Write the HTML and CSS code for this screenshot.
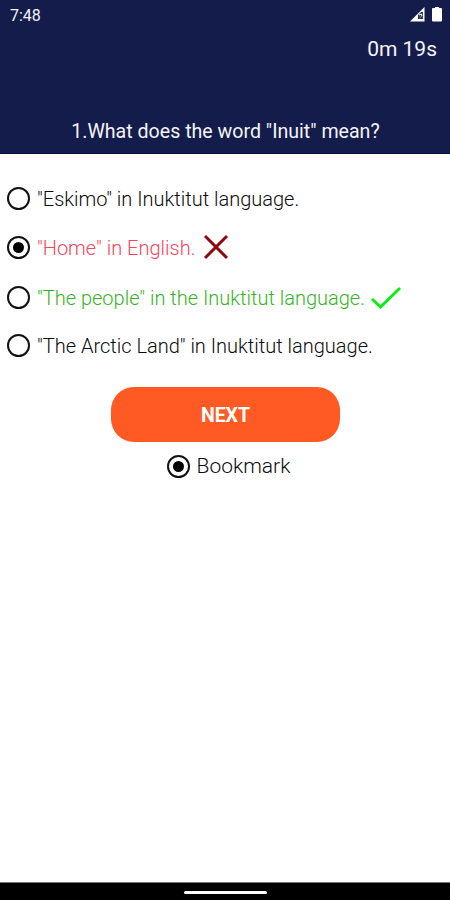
FILE: index.html
```html
<!DOCTYPE html>
<html lang="en">
<head>
<meta charset="utf-8">
<title>Quiz</title>
<link rel="stylesheet" href="styles.css">
</head>
<body>
<div class="screen">
  <header class="header">
    <div class="status">
      <span class="clock">7:48</span>
      <svg class="status-icons" width="34" height="18" viewBox="0 0 34 18">
        <path d="M0 15.5L14.5 1V15.5Z" fill="#fff"/>
        <path d="M8 13V9L11 6H13V13Z" fill="#30375f"/>
        <path d="M9 9Q12 7 12 9Q12 10 10.5 11M10.5 13V14" fill="none" stroke="#fff" stroke-width="1"/>
        <path d="M25 1H29V2H31Q32 2 32 3V14.5Q32 15.5 31 15.5H23Q22 15.5 22 14.5V3Q22 2 23 2H25Z" fill="#fff"/>
      </svg>
    </div>
    <div class="timer">0m 19s</div>
    <h1 class="question">1.What does the word "Inuit" mean?</h1>
  </header>
  <main class="main">
    <ul class="options">
      <li class="option"><span class="radio"></span><span class="label">"Eskimo" in Inuktitut language.</span></li>
      <li class="option wrong"><span class="radio checked"></span><span class="label">"Home" in English.</span>
        <svg class="cross" width="26" height="26" viewBox="0 0 26 26"><path d="M2 2L24 24M24 2L2 24" fill="none" stroke="#8f0a0c" stroke-width="3"/></svg></li>
      <li class="option right"><span class="radio"></span><span class="label">"The people" in the Inuktitut language.</span>
        <svg class="check" width="32" height="24" viewBox="0 0 32 24"><path d="M2 13L10.5 21L30 2" fill="none" stroke="#08ee12" stroke-width="3"/></svg></li>
      <li class="option"><span class="radio"></span><span class="label">"The Arctic Land" in Inuktitut language.</span></li>
    </ul>
    <button class="next">NEXT</button>
    <div class="bookmark"><span class="radio checked"></span><span class="bookmark-label">Bookmark</span></div>
  </main>
  <footer class="nav"><span class="handle"></span></footer>
</div>
</body>
</html>
```
FILE: styles.css
```css
* { box-sizing: border-box; }
body { margin: 0; font-family: Roboto, sans-serif; background: #fff; }
.screen { width: 450px; height: 900px; display: flex; flex-direction: column; overflow: hidden; }
.header { height: 154px; background: #141c4b; color: #f4f4f8; border-bottom: 1px solid #0a0b42; display: flex; flex-direction: column; }
.status { height: 30px; display: flex; justify-content: space-between; padding: 6px 6px 0 10px; }
.clock { font-size: 16px; line-height: 19px; }
.timer { height: 38px; line-height: 38px; padding-right: 13px; text-align: right; font-size: 21px; }
.question { margin: 51px 0 0; padding-left: 1px; text-align: center; font-size: 19.6px; font-weight: 400; line-height: 26px; white-space: nowrap; }
.main { flex: 1; display: flex; flex-direction: column; align-items: center; }
.options { list-style: none; margin: 20px 0 0; padding: 0 0 0 7px; width: 100%; }
.option { height: 49px; display: flex; align-items: center; color: #0c0c0c; }
.label { margin-left: 7px; font-size: 20px; font-weight: 300; white-space: nowrap; }
.wrong { color: #f5455a; }
.right { padding-top: 2px; color: #35b41f; }
.radio { flex: none; width: 23px; height: 23px; border: 2px solid #111; border-radius: 50%; display: flex; align-items: center; justify-content: center; }
.checked::after { content: ""; width: 11px; height: 11px; border-radius: 50%; background: #000; }
.cross { margin: -1px 0 0 8px; }
.check { margin-left: 5px; }
.next { width: 229px; height: 55px; margin: 17px 0 0 1px; padding: 2px 0 0; border: 0; border-radius: 23px; background: #ff5a23; color: #fff; font: 700 19.5px Roboto, sans-serif; }
.bookmark { display: flex; align-items: center; margin-top: 11px; gap: 7px; padding-left: 7px; color: #0c0c0c; }
.bookmark-label { font-size: 21px; line-height: 26px; font-weight: 300; }
.nav { height: 18px; background: #000; border-top: 1px solid #777; display: flex; align-items: center; justify-content: center; padding-top: 2px; }
.handle { width: 83px; height: 3px; background: #fff; border-radius: 2px; margin-left: 1px; }
```
